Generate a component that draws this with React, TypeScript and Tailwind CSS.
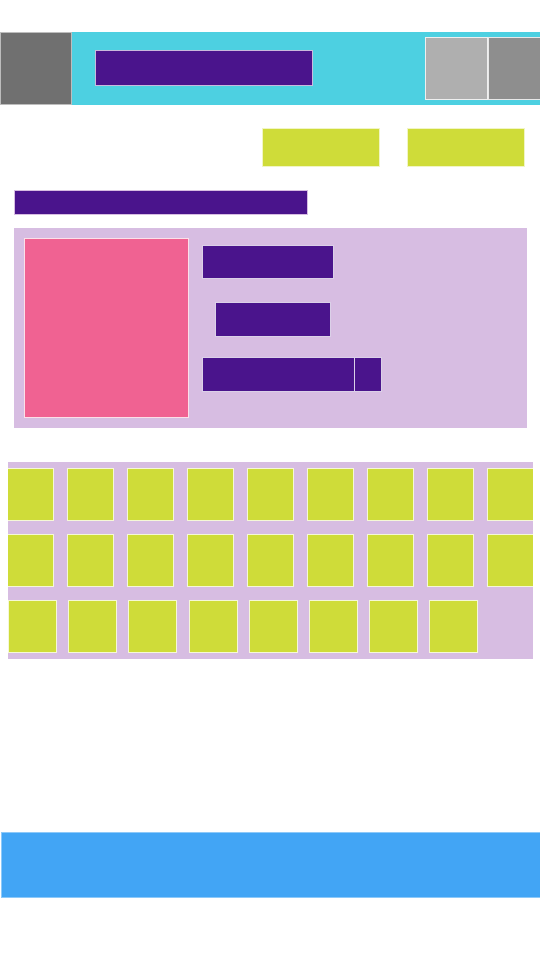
import React from 'react';

const Tile: React.FC<{ w: string }> = ({ w }) => (
  <div className={`${w} h-[53px] shrink-0 bg-[#cfdc39] border border-white/80`} />
);

export default function App() {
  const rowA = Array.from({ length: 9 });
  const rowB = Array.from({ length: 8 });

  return (
    <div className="w-[540px] h-[960px] bg-white flex flex-col overflow-hidden">
      {/* Top bar */}
      <div className="mt-[32px] h-[73px] flex">
        <div className="w-[72px] h-full bg-[#707070] border border-[#bdbdbd]" />
        <div className="flex-1 h-full bg-[#4dd0e1] flex items-start">
          <div className="ml-[23px] mt-[18px] w-[218px] h-[36px] bg-[#4a148c] border border-white/70" />
          <div className="ml-auto mt-[5px] flex h-[63px]">
            <div className="w-[63px] h-full bg-[#afafaf] border border-white/80" />
            <div className="w-[52px] h-full bg-[#8e8e8e] border border-white/80 border-r-0" />
          </div>
        </div>
      </div>

      {/* Actions */}
      <div className="mt-[23px] flex justify-end gap-[27px] pr-[15px]">
        <div className="w-[118px] h-[39px] bg-[#cfdc39] border border-white/70" />
        <div className="w-[118px] h-[39px] bg-[#cfdc39] border border-white/70" />
      </div>

      {/* Section title */}
      <div className="mt-[23px] ml-[14px] w-[294px] h-[25px] bg-[#4a148c] border border-[#d7bde2]" />

      {/* Feature card */}
      <div className="mt-[13px] ml-[14px] w-[513px] h-[200px] bg-[#d7bde2] p-[10px] flex gap-[13px]">
        <div className="w-[165px] h-[180px] bg-[#f06292] border border-white/80" />
        <div className="flex flex-col pt-[7px]">
          <div className="w-[132px] h-[34px] bg-[#4a148c] border border-white/80" />
          <div className="mt-[23px] ml-[13px] w-[116px] h-[35px] bg-[#4a148c] border border-white/80" />
          <div className="mt-[20px] flex h-[35px]">
            <div className="w-[153px] h-full bg-[#4a148c] border border-white/80" />
            <div className="w-[27px] h-full bg-[#4a148c] border border-white/80 border-l-0" />
          </div>
        </div>
      </div>

      {/* Tile grid */}
      <div className="mt-[34px] ml-[8px] w-[525px] h-[197px] bg-[#d7bde2] overflow-hidden flex flex-col pt-[6px] gap-[13px]">
        <div className="flex gap-[13px] -ml-[1px]">
          {rowA.map((_, i) => (
            <Tile key={i} w="w-[47px]" />
          ))}
        </div>
        <div className="flex gap-[13px] -ml-[1px]">
          {rowA.map((_, i) => (
            <Tile key={i} w="w-[47px]" />
          ))}
        </div>
        <div className="flex gap-[11.2px]">
          {rowB.map((_, i) => (
            <Tile key={i} w="w-[49px]" />
          ))}
        </div>
      </div>

      {/* Bottom bar */}
      <div className="mt-[173px] ml-[1px] h-[66px] bg-[#42a5f5] border border-white/40 border-r-0" />
    </div>
  );
}
